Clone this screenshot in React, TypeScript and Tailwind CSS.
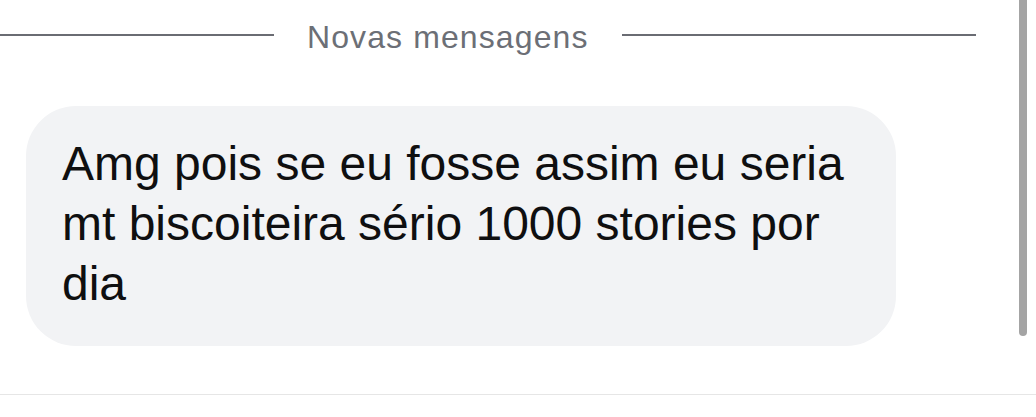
import React from 'react';

const MessageBubble: React.FC<{ text: string }> = ({ text }) => (
  <div className="ml-[26px] mt-9 w-[870px] rounded-[50px] bg-[#f2f3f5] px-9 pt-7 pb-8 text-[48px] leading-[60px] text-[#0f0f10]">
    {text}
  </div>
);

export default function App() {
  return (
    <div className="relative h-[417px] w-[1036px] overflow-hidden bg-white font-['Liberation_Sans',Arial,sans-serif]">
      {/* separator */}
      <div className="flex h-[70px] items-center">
        <div className="h-[2px] w-[274px] bg-[#6a6c73]" />
        <span className="mx-[33px] pt-[3px] text-[32px] leading-none tracking-[1.1px] text-[#6c6f76]">Novas mensagens</span>
        <div className="h-[2px] w-[354px] bg-[#6a6c73]" />
      </div>

      <MessageBubble text="Amg pois se eu fosse assim eu seria mt biscoiteira sério 1000 stories por dia" />

      <div className="mt-12 h-px w-full bg-[#e6e6e6]" />

      {/* scroll thumb */}
      <div className="absolute right-[9px] top-0 h-[336px] w-2 rounded-b-full bg-[#a4a4a4]" />
    </div>
  );
}
